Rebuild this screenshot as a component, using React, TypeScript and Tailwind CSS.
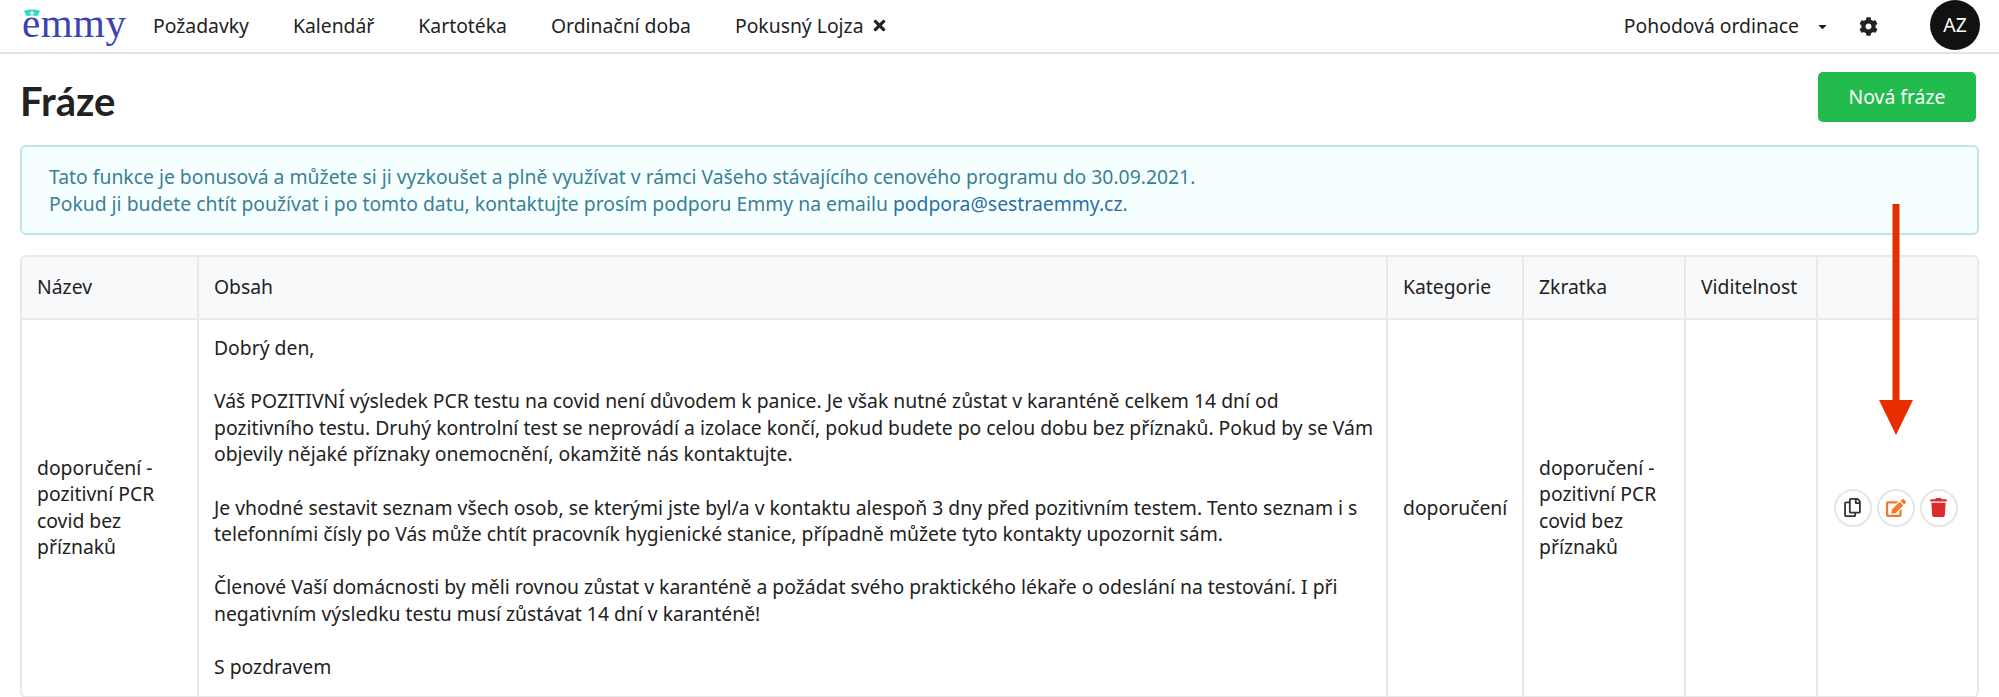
import React from "react";
import { FaCaretDown, FaCog, FaEdit, FaRegCopy, FaTimes, FaTrash } from "react-icons/fa";

const navItems = ["Požadavky", "Kalendář", "Kartotéka", "Ordinační doba"];

const phraseText = `Dobrý den,

Váš POZITIVNÍ výsledek PCR testu na covid není důvodem k panice. Je však nutné zůstat v karanténě celkem 14 dní od pozitivního testu. Druhý kontrolní test se neprovádí a izolace končí, pokud budete po celou dobu bez příznaků. Pokud by se Vám objevily nějaké příznaky onemocnění, okamžitě nás kontaktujte.

Je vhodné sestavit seznam všech osob, se kterými jste byl/a v kontaktu alespoň 3 dny před pozitivním testem. Tento seznam i s telefonními čísly po Vás může chtít pracovník hygienické stanice, případně můžete tyto kontakty upozornit sám.

Členové Vaší domácnosti by měli rovnou zůstat v karanténě a požádat svého praktického lékaře o odeslání na testování. I při negativním výsledku testu musí zůstávat 14 dní v karanténě!

S pozdravem`;

const Logo = () => (
  <div className="relative w-[108px] h-[50px] shrink-0">
    <span className="absolute left-0 top-0 font-['Liberation_Serif',serif] text-[41px] leading-[44px] tracking-[0.5px] text-[#3b43b4]">
      emmy
    </span>
    <svg className="absolute left-[1px] top-[8px]" width="18" height="9" viewBox="0 0 20 9">
      <path d="M1 1.5 C6 -0.5 14 -0.5 19 1.5 L16 7.5 C12 6.5 8 6.5 4 7.5 Z" fill="#2fdccb" />
      <path d="M9 2h2v1.2h1.2v1.6H11V6H9V4.8H7.8V3.2H9Z" fill="#ffffff" />
    </svg>
  </div>
);

const Header = () => (
  <header className="flex items-center h-[54px] pl-[22px] border-b-2 border-[#e3e3e3] bg-white">
    <Logo />
    <nav className="flex items-center ml-[23px] gap-[44px] text-[19.35px] text-[#222]">
      {navItems.map((item) => (
        <span key={item}>{item}</span>
      ))}
      <span className="flex items-center gap-[7px]">
        Pokusný Lojza <FaTimes className="text-[17px]" />
      </span>
    </nav>
    <div className="ml-auto flex items-center text-[19.35px] text-[#222] pr-[19px]">
      <span>Pohodová ordinace</span>
      <FaCaretDown className="ml-[17px] text-[13px]" />
      <FaCog className="ml-[30px] text-[19px]" />
      <div className="ml-[52px] mb-[3px] w-[50px] h-[50px] rounded-full bg-[#111] text-white text-[19.35px] flex items-center justify-center">
        AZ
      </div>
    </div>
  </header>
);

const ActionButton = ({ children }: { children: React.ReactNode }) => (
  <button className="w-[38px] h-[38px] rounded-full border-2 border-[#e6e6e6] bg-white flex items-center justify-center">
    {children}
  </button>
);

const headCell = "border-r-2 border-b-2 border-[#e9e9e9] px-[15px] text-left font-normal align-middle last:border-r-0";
const bodyCell = "border-r-2 border-[#e9e9e9] px-[15px] align-middle last:border-r-0";

const PhraseTable = () => (
  <div className="mt-[20px] border-2 border-[#e9e9e9] rounded-[6px] overflow-hidden">
    <table className="w-full table-fixed border-separate border-spacing-0 text-[19.35px] leading-[26.6px] text-[#222]">
      <colgroup>
        <col className="w-[177px]" />
        <col />
        <col className="w-[136px]" />
        <col className="w-[162px]" />
        <col className="w-[132px]" />
        <col className="w-[159px]" />
      </colgroup>
      <thead className="bg-[#f8f9fb]">
        <tr className="h-[63px]">
          <th className={headCell}>Název</th>
          <th className={headCell}>Obsah</th>
          <th className={headCell}>Kategorie</th>
          <th className={headCell}>Zkratka</th>
          <th className={`${headCell} whitespace-nowrap`}>Viditelnost</th>
          <th className={headCell}></th>
        </tr>
      </thead>
      <tbody>
        <tr>
          <td className={bodyCell}>doporučení - pozitivní PCR covid bez příznaků</td>
          <td className={`${bodyCell} !pr-[8px] py-[15px] whitespace-pre-line`}>{phraseText}</td>
          <td className={bodyCell}>doporučení</td>
          <td className={bodyCell}>doporučení - pozitivní PCR covid bez příznaků</td>
          <td className={bodyCell}></td>
          <td className={bodyCell}>
            <div className="flex justify-center gap-[5px] pr-[4px]">
              <ActionButton>
                <FaRegCopy className="text-[19px] text-[#333]" />
              </ActionButton>
              <ActionButton>
                <FaEdit className="text-[20px] text-[#f5782a]" />
              </ActionButton>
              <ActionButton>
                <FaTrash className="text-[19px] text-[#dc2a2e]" />
              </ActionButton>
            </div>
          </td>
        </tr>
      </tbody>
    </table>
  </div>
);

const App = () => {
  return (
    <div className="relative h-[697px] overflow-hidden bg-white font-['Noto_Sans',sans-serif]">
      <Header />
      <main className="px-[20px]">
        <div className="flex items-center justify-between h-[70px] mt-[8px]">
          <h1 className="pt-[7px] font-['Lato',sans-serif] font-bold text-[40px] text-[#222]">Fráze</h1>
          <button className="w-[158px] h-[50px] mr-[3px] rounded-[5px] bg-[#22bb4d] text-white text-[19.35px]">
            Nová fráze
          </button>
        </div>
        <div className="mt-[13px] h-[90px] flex flex-col justify-center px-[27px] border-2 border-[#bfe4ec] rounded-[6px] bg-[#f6ffff] text-[19.35px] leading-[27px] text-[#3b7f95]">
          <p>
            Tato funkce je bonusová a můžete si ji vyzkoušet a plně využívat v rámci Vašeho stávajícího cenového
            programu do 30.09.2021.
          </p>
          <p>
            Pokud ji budete chtít používat i po tomto datu, kontaktujte prosím podporu Emmy na emailu{" "}
            <span className="text-[#2c6fa5]">podpora@sestraemmy.cz</span>.
          </p>
        </div>
        <PhraseTable />
      </main>
      {/* red annotation arrow over the table */}
      <svg className="absolute left-[1870px] top-[200px]" width="52" height="242" viewBox="0 0 52 242">
        <rect x="22.5" y="4" width="7" height="200" fill="#e62e00" />
        <path d="M9 200 H43 L26 235 Z" fill="#e62e00" />
      </svg>
    </div>
  );
};

export default App;
